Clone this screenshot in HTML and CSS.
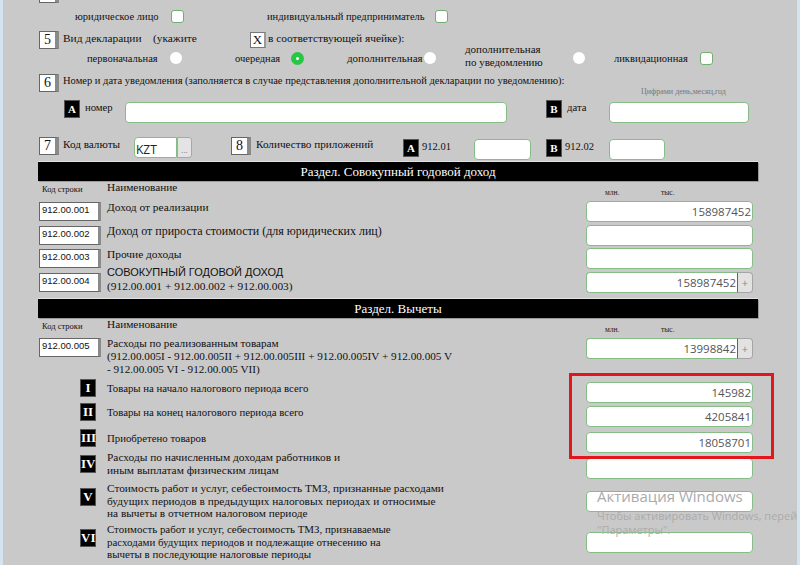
FILE: index.html
```html
<!DOCTYPE html>
<html lang="ru">
<head>
    <meta charset="UTF-8">
    <title>Форма 912.00</title>
    <link rel="stylesheet" href="styles.css">
</head>
<body>
    <div class="cut"></div>

    <div class="row legal">
        <span class="f-legal">юридическое лицо</span>
        <span class="cb"></span>
        <span class="f-ip">индивидуальный предприниматель</span>
        <span class="cb"></span>
    </div>

    <div class="row row5">
        <span class="num">5</span>
        <span class="f-kind">Вид декларации &nbsp;&nbsp;&nbsp;(укажите</span>
        <span class="xbox">X</span>
        <span class="f-note">в соответствующей ячейке):</span>
    </div>

    <div class="row radios">
        <span class="f-first">первоначальная</span>
        <span class="rb"></span>
        <span class="f-regular">очередная</span>
        <span class="rb on"></span>
        <span class="f-extra">дополнительная</span>
        <span class="rb"></span>
        <span class="f-notice">дополнительная<br>по уведомлению</span>
        <span class="rb"></span>
        <span class="f-liq">ликвидационная</span>
        <span class="cb"></span>
    </div>

    <div class="row row6">
        <span class="num">6</span>
        <span class="f-text">Номер и дата уведомления (заполняется в случае представления дополнительной декларации по уведомлению):</span>
    </div>

    <div class="hint">Цифрами день,месяц,год</div>

    <div class="row notice">
        <span class="sq">A</span>
        <span class="f-small">номер</span>
        <input class="box box-num" type="text">
        <span class="sq">B</span>
        <span class="f-small f-date">дата</span>
        <input class="box box-date" type="text">
    </div>

    <div class="row row7">
        <span class="num">7</span>
        <span class="f-cur">Код валюты</span>
        <span class="combo"><input type="text" value="KZT"><span class="dots">...</span></span>
        <span class="num">8</span>
        <span class="f-apps">Количество приложений</span>
        <span class="sq">A</span>
        <span class="f-code">912.01</span>
        <input class="box box-a" type="text">
        <span class="sq">B</span>
        <span class="f-code f-code-b">912.02</span>
        <input class="box box-b" type="text">
    </div>

    <div class="bar">Раздел. Совокупный годовой доход</div>
    <div class="grid head">
        <span class="h-code">Код строки</span>
        <span class="h-name">Наименование</span>
        <span class="h-units"><span>млн.</span><span>тыс.</span></span>
    </div>

    <div class="grid line">
        <span class="code">912.00.001</span>
        <span class="name">Доход от реализации</span>
        <input class="fld" type="text" value="158987452">
    </div>
    <div class="grid line">
        <span class="code">912.00.002</span>
        <span class="name wide">Доход от прироста стоимости (для юридических лиц)</span>
        <input class="fld" type="text">
    </div>
    <div class="grid line gap2">
        <span class="code">912.00.003</span>
        <span class="name">Прочие доходы</span>
        <input class="fld" type="text">
    </div>
    <div class="grid line">
        <span class="code">912.00.004</span>
        <span class="name total"><span class="caps">СОВОКУПНЫЙ ГОДОВОЙ ДОХОД</span><br>(912.00.001 + 912.00.002 + 912.00.003)</span>
        <span class="sum"><input class="fld" type="text" value="158987452"><span class="plus">+</span></span>
    </div>

    <div class="bar bar2">Раздел. Вычеты</div>
    <div class="grid head">
        <span class="h-code">Код строки</span>
        <span class="h-name">Наименование</span>
        <span class="h-units"><span>млн.</span><span>тыс.</span></span>
    </div>

    <div class="grid line first">
        <span class="code">912.00.005</span>
        <span class="name tall">Расходы по реализованным товарам<br>(912.00.005I - 912.00.005II + 912.00.005III + 912.00.005IV + 912.00.005 V<br>- 912.00.005 VI - 912.00.005 VII)</span>
        <span class="sum"><input class="fld" type="text" value="13998842"><span class="plus">+</span></span>
    </div>

    <div class="grid line sub gap23">
        <span class="sq mk">I</span>
        <span class="name fine">Товары на начало налогового периода всего</span>
        <input class="fld" type="text" value="145982">
    </div>
    <div class="grid line sub">
        <span class="sq mk">II</span>
        <span class="name fine">Товары на конец налогового периода всего</span>
        <input class="fld" type="text" value="4205841">
    </div>
    <div class="grid line sub gap5">
        <span class="sq mk">III</span>
        <span class="name fine">Приобретено товаров</span>
        <input class="fld" type="text" value="18058701">
    </div>
    <div class="grid line sub gap5">
        <span class="sq mk">IV</span>
        <span class="name two">Расходы по начисленным доходам работников и<br>иным выплатам физическим лицам</span>
        <input class="fld" type="text">
    </div>
    <div class="grid line sub gap12">
        <span class="sq mk">V</span>
        <span class="name three">Стоимость работ и услуг, себестоимость ТМЗ, признанные расходами<br>будущих периодов в предыдущих налоговых периодах и относимые<br>на вычеты в отчетном налоговом периоде</span>
        <input class="fld" type="text">
    </div>
    <div class="grid line sub gap20">
        <span class="sq mk">VI</span>
        <span class="name three narrow">Стоимость работ и услуг, себестоимость ТМЗ, признаваемые<br>расходами будущих периодов и подлежащие отнесению на<br>вычеты в последующие налоговые периоды</span>
        <input class="fld" type="text">
    </div>

    <div class="mark"></div>

    <div class="wm">
        <div class="wm-title">Активация Windows</div>
        <div class="wm-text">Чтобы активировать Windows, перейдите в раздел<br>"Параметры".</div>
    </div>
</body>
</html>
```

FILE: styles.css
```css
* {
    margin: 0;
    padding: 0;
    box-sizing: border-box;
}

html, body {
    height: 100%;
}

body {
    position: relative;
    overflow: hidden;
    background-color: #c9c9c9;
    border-left: 3px solid #d4e3f0;
    border-right: 3px solid #d4e3f0;
    font-family: "Liberation Serif", "Times New Roman", serif;
    font-size: 12px;
    color: #111;
}

input {
    outline: none;
}

/* верхний край предыдущего блока */
.cut {
    width: 20px;
    height: 3px;
    margin-left: 36px;
    background: #fff;
    border: 1px solid #666;
    border-top: none;
    border-right: 4px solid #8a8a8a;
}

.row {
    display: flex;
    align-items: flex-start;
    white-space: nowrap;
}

.cb {
    width: 13px;
    height: 13px;
    background: #fff;
    border: 1px solid #72ad72;
    border-radius: 3px;
}

.rb {
    width: 12px;
    height: 12px;
    border-radius: 50%;
    background: #fff;
}

.rb.on {
    width: 13px;
    height: 13px;
    border: 5px solid #25c941;
}

.num {
    width: 20px;
    height: 18px;
    background: #fff;
    border: 1px solid #666;
    border-right: 4px solid #8a8a8a;
    font-size: 14px;
    line-height: 16px;
    text-align: center;
}

.xbox {
    width: 16px;
    height: 16px;
    margin-top: 1px;
    background: #fff;
    border: 1px solid #777;
    border-right: 2px solid #999;
    font-size: 13px;
    line-height: 14px;
    text-align: center;
}

.sq {
    width: 16px;
    height: 18px;
    background: #000;
    border: 1px solid #555;
    color: #fff;
    font-weight: bold;
    font-size: 11px;
    line-height: 16px;
    text-align: center;
}

.box {
    height: 21px;
    background: #fff;
    border: 1px solid #86bd86;
    border-radius: 4px;
}

/* юр. лицо / ИП */
.legal {
    height: 17px;
    margin-top: 5px;
    align-items: center;
    font-size: 10.5px;
}

.f-legal {
    width: 168px;
    padding-left: 72px;
}

.f-ip {
    width: 251px;
    padding-left: 83px;
}

/* вид декларации */
.row5 {
    height: 18px;
    margin-top: 6px;
    margin-left: 36px;
    font-size: 11.4px;
}

.f-kind {
    width: 191px;
    padding-left: 4px;
    line-height: 14px;
}

.f-note {
    padding-left: 2px;
    line-height: 14px;
}

.radios {
    height: 18px;
    align-items: center;
    font-size: 10.5px;
}

.f-first {
    width: 167px;
    padding-left: 84px;
}

.f-regular {
    width: 109px;
    padding-left: 53px;
}

.f-extra {
    width: 120px;
    padding-left: 43px;
    font-size: 11px;
}

.f-notice {
    width: 137px;
    padding-left: 29px;
    align-self: flex-start;
    margin-top: -6px;
    font-size: 11px;
    line-height: 13px;
}

.f-liq {
    width: 115px;
    padding-left: 29px;
}

/* уведомление */
.row6 {
    height: 18px;
    margin-top: 7px;
    margin-left: 36px;
}

.f-text {
    padding-left: 4px;
    font-size: 10.5px;
    line-height: 14px;
}

.hint {
    height: 8px;
    margin-top: -4px;
    padding-left: 638px;
    font-size: 8px;
    line-height: 8px;
    color: #777;
}

.notice {
    height: 23px;
    margin-top: 4px;
    margin-left: 61px;
}

.f-small {
    width: 45px;
    padding-left: 5px;
    font-size: 10.7px;
    line-height: 15px;
}

.f-date {
    width: 47px;
}

.notice .box {
    margin-top: 2px;
}

.box-num {
    width: 382px;
    margin-right: 39px;
}

.box-date {
    width: 140px;
}

/* валюта и приложения */
.row7 {
    height: 24px;
    margin-top: 14px;
    margin-left: 36px;
}

.f-cur {
    width: 75px;
    padding-left: 4px;
    font-size: 11.2px;
    line-height: 14px;
}

.combo {
    display: flex;
    width: 58px;
    height: 21px;
    margin-right: 39px;
}

.combo input {
    width: 43px;
    height: 21px;
    padding: 3px 0 0 1px;
    background: #fff;
    border: 1px solid #86bd86;
    border-radius: 4px 0 0 4px;
    font: 12px "Open Sans", sans-serif;
    color: #222;
}

.dots {
    width: 15px;
    height: 21px;
    background: #e4e4e4;
    border: 1px solid #a8a8a8;
    border-radius: 0 3px 3px 0;
    font: 8px/24px "Open Sans", sans-serif;
    color: #777;
    text-align: center;
}

.f-apps {
    width: 152px;
    padding-left: 5px;
    font-size: 11.2px;
    line-height: 14px;
}

.row7 .sq {
    margin-top: 2px;
}

.f-code {
    width: 55px;
    padding-left: 3px;
    margin-top: 2px;
    font-size: 10.5px;
    line-height: 16px;
}

.f-code-b {
    width: 47px;
}

.row7 .box {
    margin-top: 2px;
}

.box-a {
    width: 57px;
    margin-right: 15px;
}

.box-b {
    width: 56px;
}

/* разделы */
.bar {
    width: 720px;
    height: 19px;
    margin: 1px 0 0 35px;
    background: #000;
    box-shadow: 0 -1px 0 #e2e2e2, 1px 1px 0 #9a9a9a;
    color: #fff;
    font-size: 13px;
    line-height: 19px;
    text-align: center;
}

.bar2 {
    margin-top: 6px;
}

.grid {
    display: grid;
    grid-template-columns: 62px 485px 167px;
    align-items: start;
    margin-left: 36px;
}

.head {
    height: 20px;
}

.h-code {
    margin-top: 3px;
    padding-left: 3px;
    font-size: 8.5px;
    line-height: 10px;
}

.h-name {
    margin-top: -1px;
    padding-left: 6px;
    font-size: 11.3px;
    line-height: 14px;
}

.h-units {
    display: flex;
    margin-top: 8px;
    padding-left: 19px;
    font-size: 7.5px;
    line-height: 8px;
    color: #222;
}

.h-units span:first-child {
    width: 56px;
}

.line {
    height: 21px;
}

.line + .line {
    margin-top: 3px;
}

.line.gap2 { margin-top: 2px; }
.line.gap5 { margin-top: 5px; }
.line.gap12 { margin-top: 12px; }
.line.gap20 { margin-top: 20px; }
.line.gap23 { margin-top: 23px; }

.code {
    width: 62px;
    height: 19px;
    margin-top: 1px;
    padding-left: 2px;
    background: #fff;
    border: 1px solid #666;
    border-right: 3px solid #8a8a8a;
    font: 9.5px/14px "Liberation Sans", Arial, sans-serif;
    color: #111;
}

.line.first .code {
    margin-top: 0;
}

.name {
    margin-top: -1px;
    padding-left: 6px;
    font-size: 11.4px;
    line-height: 14px;
    white-space: nowrap;
}

.name.wide {
    font-size: 12px;
}

.name.fine {
    font-size: 10.8px;
}

.name.total {
    margin-top: -7px;
}

.caps {
    font: 11px "Liberation Sans", Arial, sans-serif;
}

.name.tall {
    font-size: 11.2px;
    line-height: 13px;
}

.name.two {
    margin-top: -7px;
    line-height: 12.5px;
}

.name.three {
    margin-top: -9px;
    font-size: 11.3px;
    line-height: 12.5px;
}

.name.narrow {
    font-size: 10.9px;
}

.fld {
    width: 167px;
    height: 21px;
    padding: 0 1px;
    background: #fff;
    border: 1px solid #86bd86;
    border-radius: 4px;
    font: 11.5px "Open Sans", sans-serif;
    color: #555;
    text-align: right;
}

.sum {
    display: flex;
}

.sum .fld {
    width: 152px;
    border-radius: 4px 0 0 4px;
    border-right-color: #3f7d3f;
}

.plus {
    width: 15px;
    height: 21px;
    background: #e2e2e2;
    border: 1px solid #a5a5a5;
    border-left: none;
    border-radius: 0 4px 4px 0;
    font: 11px/19px "Open Sans", sans-serif;
    color: #888;
    text-align: center;
}

.sub .mk {
    margin: -3px 0 0 41px;
    font-size: 13px;
}

/* выделение поверх формы */
.mark {
    position: absolute;
    left: 566px;
    top: 373px;
    width: 205px;
    height: 86px;
    border: 3px solid #e3161c;
}

.wm {
    position: absolute;
    left: 594px;
    top: 486px;
    white-space: nowrap;
    font-family: "Open Sans", sans-serif;
    color: #ababab;
}

.wm-title {
    font-size: 15px;
    line-height: 20px;
}

.wm-text {
    margin-top: 3px;
    font-size: 11px;
    line-height: 14px;
}
```
